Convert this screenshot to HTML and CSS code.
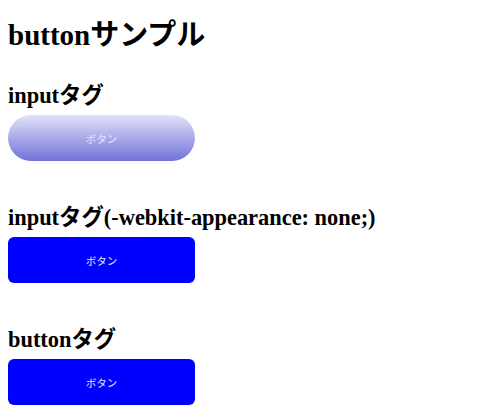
FILE: index.html
```html
<!DOCTYPE html>
<html lang="ja">
<head>
<meta charset="utf-8">
<link rel="stylesheet" href="styles.css">
</head>
<body>
<h1 class="title">buttonサンプル</h1>
<section class="sample">
  <h2 class="sample-title">inputタグ</h2>
  <input class="btn btn-gradient" type="button" value="ボタン">
</section>
<section class="sample">
  <h2 class="sample-title">inputタグ(-webkit-appearance: none;)</h2>
  <input class="btn btn-flat" type="button" value="ボタン">
</section>
<section class="sample">
  <h2 class="sample-title">buttonタグ</h2>
  <button class="btn btn-flat" type="button">ボタン</button>
</section>
</body>
</html>
```
FILE: styles.css
```css
body {
  margin: 0;
  padding: 8px;
  background: #fff;
  color: #000;
  font-family: "Liberation Serif", "Noto Sans CJK JP", serif;
}
.title {
  font-size: 29px;
  line-height: 34px;
  margin: 10px 0 0;
}
.sample-title {
  font-size: 22.4px;
  line-height: 26px;
  margin: 0 0 6px;
}
.sample {
  margin-top: 31px;
}
.sample + .sample {
  margin-top: 44px;
}
.btn {
  display: block;
  width: 187px;
  height: 46px;
  margin: 0;
  padding: 0;
  border: none;
  font-family: "Noto Sans CJK JP", sans-serif;
  font-size: 10.5px;
  color: #e4e4ff;
  -webkit-appearance: none;
  appearance: none;
}
.btn-gradient {
  border-radius: 23px;
  background: linear-gradient(#e2e2fa, #7272d8);
}
.btn-flat {
  border-radius: 6px;
  background: #0000ff;
}
```
